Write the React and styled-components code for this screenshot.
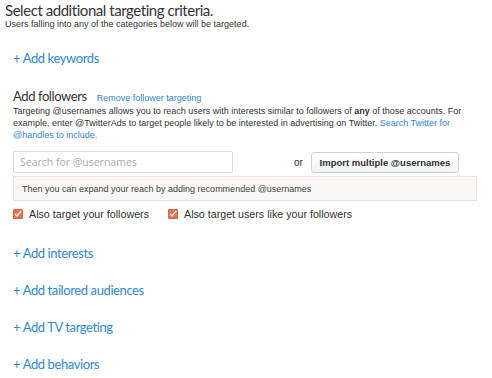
import React from "react";
import styled, { createGlobalStyle } from "styled-components";

const Global = createGlobalStyle`
  html, body { margin: 0; padding: 0; background: #fff; }
  body { font-family: "Liberation Sans", Arial, sans-serif; color: #333; }
`;

const Page = styled.div`
  width: 492px;
  height: 378px;
  overflow: hidden;
  padding: 1px 0 0 5px;
  box-sizing: border-box;
`;

const Title = styled.h2`
  margin: 0;
  font-family: Lato, sans-serif;
  font-weight: 400;
  font-size: 15px;
  letter-spacing: -0.45px;
  line-height: 18px;
  color: #333;
`;

const Subtitle = styled.p`
  margin: 0;
  font-size: 9px;
  line-height: 11px;
  color: #333;
`;

const Sections = styled.div`
  padding-left: 8px;
  display: flex;
  flex-direction: column;
`;

const AddLink = styled.a`
  display: block;
  font-family: Lato, sans-serif;
  font-size: 13px;
  letter-spacing: -0.4px;
  line-height: 17px;
  color: #3188cf;
  text-decoration: none;
  margin-top: ${(p) => p.$mt}px;
`;

const Followers = styled.section`
  margin-top: 21px;
  display: flex;
  flex-direction: column;
`;

const HeadRow = styled.div`
  display: flex;
  align-items: baseline;
  gap: 10px;
`;

const SubHead = styled.h3`
  margin: 0;
  font-family: Lato, sans-serif;
  font-weight: 400;
  font-size: 13px;
  letter-spacing: -0.4px;
  line-height: 17px;
  color: #333;
`;

const SmallLink = styled.a`
  font-size: 9px;
  color: #3188cf;
  text-decoration: none;
`;

const Desc = styled.p`
  margin: 0;
  font-size: 9px;
  line-height: 12px;
  color: #333;
  width: 466px;
  b { font-weight: 700; }
  a { color: #3188cf; text-decoration: none; }
`;

const SearchRow = styled.div`
  margin-top: 10px;
  display: flex;
  align-items: center;
  width: 464px;
`;

const SearchInput = styled.input`
  width: 220px;
  height: 22px;
  box-sizing: border-box;
  border: 1px solid #ddd;
  border-radius: 2px;
  padding: 0 6px;
  font-family: "Open Sans", sans-serif;
  font-size: 10.5px;
  color: #333;
  outline: none;
  &::placeholder { color: #aaa; }
`;

const Or = styled.span`
  margin-left: 61px;
  font-size: 10px;
  color: #333;
`;

const ImportButton = styled.button`
  margin-left: 8px;
  height: 21px;
  width: 148px;
  box-sizing: border-box;
  border: 1px solid #ccd3da;
  border-radius: 3px;
  background: linear-gradient(#fff, #f1f3f5);
  font-family: "Liberation Sans", Arial, sans-serif;
  font-weight: 700;
  font-size: 9.5px;
  color: #333;
  padding: 0;
`;

const Hint = styled.div`
  margin-top: 3px;
  width: 464px;
  height: 25px;
  box-sizing: border-box;
  border: 1px solid #e8e3e0;
  background: #f9f6f4;
  font-size: 9px;
  color: #444;
  padding: 0 8px;
  display: flex;
  align-items: center;
`;

const Checks = styled.div`
  margin-top: 7px;
  display: flex;
  gap: 19px;
`;

const CheckLabel = styled.label`
  display: flex;
  align-items: center;
  gap: 6px;
  font-size: 10.7px;
  color: #333;
`;

const Box = styled.span`
  width: 10px;
  height: 10px;
  box-sizing: border-box;
  border: 1px solid #d9674a;
  border-radius: 1px;
  background: #e4754f;
  display: inline-flex;
  align-items: center;
  justify-content: center;
`;

const Check = () => (
  <Box>
    <svg width="8" height="8" viewBox="0 0 8 8">
      <path d="M1 4 L3 6 L7.2 0.8" stroke="#fff" strokeWidth="1.3" fill="none" />
    </svg>
  </Box>
);

export default function App() {
  return (
    <Page>
      <Global />
      <Title>Select additional targeting criteria.</Title>
      <Subtitle>Users falling into any of the categories below will be targeted.</Subtitle>
      <Sections>
        <AddLink href="#" $mt={20}>+ Add keywords</AddLink>
        <Followers>
          <HeadRow>
            <SubHead>Add followers</SubHead>
            <SmallLink href="#">Remove follower targeting</SmallLink>
          </HeadRow>
          <Desc>
            Targeting @usernames allows you to reach users with interests similar to followers of <b>any</b> of those accounts. For example, enter @TwitterAds to target people likely to be interested in advertising on Twitter. <a href="#">Search Twitter for @handles to include.</a>
          </Desc>
          <SearchRow>
            <SearchInput placeholder="Search for @usernames" />
            <Or>or</Or>
            <ImportButton>Import multiple @usernames</ImportButton>
          </SearchRow>
          <Hint>Then you can expand your reach by adding recommended @usernames</Hint>
          <Checks>
            <CheckLabel><Check />Also target your followers</CheckLabel>
            <CheckLabel><Check />Also target users like your followers</CheckLabel>
          </Checks>
        </Followers>
        <AddLink href="#" $mt={25}>+ Add interests</AddLink>
        <AddLink href="#" $mt={20}>+ Add tailored audiences</AddLink>
        <AddLink href="#" $mt={20}>+ Add TV targeting</AddLink>
        <AddLink href="#" $mt={20}>+ Add behaviors</AddLink>
      </Sections>
    </Page>
  );
}
